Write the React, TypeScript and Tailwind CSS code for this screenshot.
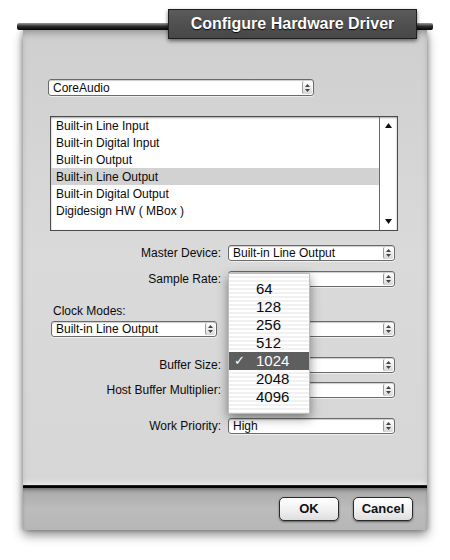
import React from "react";

function Stepper() {
  return (
    <div className="my-[1px] mr-[1px] flex w-[10px] flex-col items-center justify-center gap-[2px] rounded-[2px] border-l border-[#9a9a9a] bg-gradient-to-b from-[#ffffff] to-[#d8d8d8]">
      <svg width="5" height="3" viewBox="0 0 5 3"><path d="M2.5 0L5 3H0z" fill="#444" /></svg>
      <svg width="5" height="3" viewBox="0 0 5 3"><path d="M0 0h5L2.5 3z" fill="#444" /></svg>
    </div>
  );
}

function Select({ value, className }: { value: string; className: string }) {
  return (
    <div
      className={
        "flex shrink-0 items-stretch rounded-[3px] border border-[#6a6a6a] bg-white shadow-[inset_0_1px_1px_rgba(0,0,0,0.2),0_1px_0_rgba(255,255,255,0.6)] " +
        className
      }
    >
      <div className="flex flex-1 items-center overflow-hidden whitespace-nowrap pl-[4px] text-[12px] text-[#0a0a0a]">{value}</div>
      <Stepper />
    </div>
  );
}

function Row({ label, value, className }: { label: string; value: string; className: string }) {
  return (
    <div className={"flex items-center gap-[7px] " + className}>
      <div className="w-[171px] text-right text-[12px] text-[#0a0a0a]">{label}</div>
      <Select value={value} className="h-[16px] w-[167px]" />
    </div>
  );
}

const items = [
  "Built-in Line Input",
  "Built-in Digital Input",
  "Built-in Output",
  "Built-in Line Output",
  "Built-in Digital Output",
  "Digidesign HW ( MBox )",
];

const sizes = ["64", "128", "256", "512", "1024", "2048", "4096"];

export default function App() {
  return (
    <div
      className="h-[560px] w-[450px] overflow-hidden bg-white"
      style={{ fontFamily: '"Liberation Sans", Arial, sans-serif' }}
    >
      {/* title strip */}
      <div className="mx-[17px] flex h-[30px]">
        <div className="mt-[23px] h-[7px] flex-1 rounded-l-[2px] bg-gradient-to-b from-[#9a9a9a] via-[#2a2a2a] to-[#050505]" />
        <div className="relative z-10 mt-[9px] flex h-[30px] w-[249px] shrink-0 items-center justify-center border border-[#1e1e1e] bg-gradient-to-b from-[#5a5a5a] to-[#474747] shadow-[0_2px_4px_rgba(0,0,0,0.55)]">
          <span className="text-[16px] font-bold text-white [text-shadow:0_1px_1px_rgba(0,0,0,0.9)]">
            Configure Hardware Driver
          </span>
        </div>
        <div className="mt-[23px] h-[7px] w-[16px] rounded-r-[2px] bg-gradient-to-b from-[#9a9a9a] via-[#2a2a2a] to-[#050505]" />
      </div>

      {/* panel */}
      <div className="mx-[23px] w-[404px] shadow-[0_5px_10px_rgba(0,0,0,0.45),-2px_0_4px_rgba(0,0,0,0.15),2px_0_4px_rgba(0,0,0,0.15)]">
        <div className="relative flex h-[455px] flex-col bg-gradient-to-b from-[#cfcfcf] via-[#dadada] to-[#d6d6d6] pt-[49px] shadow-[inset_0_6px_8px_-4px_rgba(0,0,0,0.35),inset_0_-8px_6px_-6px_rgba(255,255,255,0.6)]">
          <Select value="CoreAudio" className="ml-[25px] h-[17px] w-[266px]" />

          {/* list */}
          <div className="ml-[27px] mt-[20px] flex h-[115px] w-[348px] border border-[#4a4a4a] bg-white shadow-[inset_0_1px_2px_rgba(0,0,0,0.35)]">
            <div className="flex-1 overflow-hidden">
              {items.map((t, i) => (
                <div
                  key={t}
                  className={
                    "flex h-[17px] items-center pl-[5px] text-[12px] text-[#0a0a0a] " +
                    (i === 3 ? "bg-[#d2d2d2]" : "")
                  }
                >
                  {t}
                </div>
              ))}
            </div>
            <div className="flex w-[18px] flex-col items-center justify-between border-l border-[#6a6a6a] py-[6px]">
              <svg width="7" height="5" viewBox="0 0 7 5"><path d="M3.5 0L7 5H0z" fill="#111" /></svg>
              <svg width="7" height="5" viewBox="0 0 7 5"><path d="M0 0h7L3.5 5z" fill="#111" /></svg>
            </div>
          </div>

          <Row label="Master Device:" value="Built-in Line Output" className="ml-[27px] mt-[13px]" />
          <Row label="Sample Rate:" value="44100" className="ml-[27px] mt-[8px]" />

          <div className="ml-[30px] mt-[16px] h-[14px] text-[12px] leading-[14px] text-[#0a0a0a]">Clock Modes:</div>
          <div className="ml-[28px] mt-[3px] flex gap-[11px]">
            <Select value="Built-in Line Output" className="h-[16px] w-[166px]" />
            <Select value="" className="h-[16px] w-[167px]" />
          </div>

          <Row label="Buffer Size:" value="" className="ml-[27px] mt-[19px]" />
          <Row label="Host Buffer Multiplier:" value="" className="ml-[27px] mt-[7px]" />
          <Row label="Work Priority:" value="High" className="ml-[27px] mt-[18px]" />

          {/* popup menu */}
          <div className="absolute left-[205px] top-[243px] z-20 w-[82px] border border-[#bdbdbd] bg-[repeating-linear-gradient(180deg,#ffffff_0px,#ffffff_2px,#f1f1f1_2px,#f1f1f1_4px)] pb-[7px] pt-[6px] shadow-[0_4px_10px_rgba(0,0,0,0.45)]">
            {sizes.map((s) => (
              <div
                key={s}
                className={
                  "flex h-[18px] items-center text-[15px] " +
                  (s === "1024" ? "bg-[#5e5e5e] text-white" : "text-[#0a0a0a]")
                }
              >
                <span className="w-[27px] pl-[5px] text-[13px]">{s === "1024" ? "✓" : ""}</span>
                <span>{s}</span>
              </div>
            ))}
          </div>
        </div>

        <div className="h-[3px] bg-gradient-to-b from-[#444] via-[#000] to-[#111]" />
        <div className="flex h-[42px] items-center justify-end gap-[14px] bg-gradient-to-b from-[#a9a9a9] via-[#bcbcbc] to-[#b6b6b6] pr-[14px] shadow-[inset_0_3px_4px_-2px_rgba(0,0,0,0.5)]">
          <button className="flex h-[24px] w-[60px] items-center justify-center rounded-[5px] border border-[#2a2a2a] bg-gradient-to-b from-[#ffffff] via-[#f2f2f2] to-[#dedede] text-[13px] font-bold text-[#111] shadow-[0_1px_2px_rgba(0,0,0,0.5)]">
            OK
          </button>
          <button className="flex h-[24px] w-[60px] items-center justify-center rounded-[5px] border border-[#2a2a2a] bg-gradient-to-b from-[#ffffff] via-[#f2f2f2] to-[#dedede] text-[13px] font-bold text-[#111] shadow-[0_1px_2px_rgba(0,0,0,0.5)]">
            Cancel
          </button>
        </div>
      </div>
    </div>
  );
}
